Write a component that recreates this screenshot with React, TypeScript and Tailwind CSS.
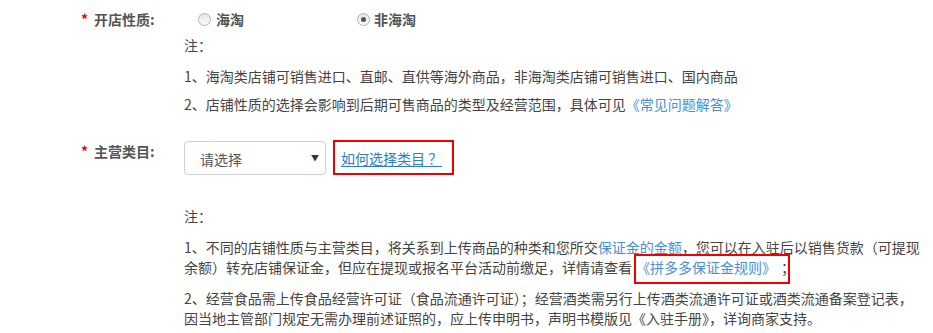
const Radio = ({ checked }: { checked?: boolean }) => (
  <span className="inline-flex h-[13px] w-[13px] items-center justify-center rounded-full border border-[#b5b5b5] bg-gradient-to-b from-[#e6e6e6] to-[#fbfbfb]">
    {checked && <span className="h-[5px] w-[5px] rounded-full bg-[#555]" />}
  </span>
);

const Label = ({ text }: { text: string }) => (
  <div className="flex w-[184px] shrink-0 items-start pl-[81px] text-[14px] font-bold leading-[20px] text-[#555]">
    <span className="mr-[6px] text-[#e60012]">*</span>
    <span>{text}</span>
  </div>
);

export default function App() {
  return (
    <div
      className="min-h-[333px] w-[933px] bg-white text-[14px] leading-[20px] text-[#444]"
      style={{ fontFamily: '"Noto Sans CJK SC", "Noto Sans", sans-serif' }}
    >
      {/* 开店性质 */}
      <div className="flex pt-[9px]">
        <Label text="开店性质:" />
        <div className="w-[740px]">
          <div className="flex items-center font-bold text-[#555]">
            <label className="flex w-[173px] items-center gap-[5px] pl-[14px]">
              <Radio />
              <span>海淘</span>
            </label>
            <label className="flex items-center gap-[4px]">
              <Radio checked />
              <span>非海淘</span>
            </label>
          </div>
          <p className="mt-[6px]">注：</p>
          <p className="mt-[11px]">1、海淘类店铺可销售进口、直邮、直供等海外商品，非海淘类店铺可销售进口、国内商品</p>
          <p className="mt-[8px]">
            2、店铺性质的选择会影响到后期可售商品的类型及经营范围，具体可见
            <a className="text-[#4a8fd3]">《常见问题解答》</a>
          </p>
        </div>
      </div>

      {/* 主营类目 */}
      <div className="mt-[26px] flex">
        <div className="pt-[1px]">
          <Label text="主营类目:" />
        </div>
        <div className="w-[740px]">
          <div className="flex items-center">
            <div className="flex h-[34px] w-[142px] items-center justify-between rounded-[4px] border border-[#d0d0d0] pl-[15px] pr-[6px] text-[#555]">
              <span className="pt-[3px]">请选择</span>
              <span className="text-[8px] text-[#333]">▼</span>
            </div>
            <div className="ml-[7px] flex h-[35px] items-center border-2 border-[#ee0000] pl-[6px] pr-[10px]">
              <a className="text-[#2f7cc6] underline underline-offset-[2px]">如何选择类目 ？</a>
            </div>
          </div>
          <p className="mt-[31px]">注：</p>
          <p className="mt-[11px] w-[738px]">
            1、不同的店铺性质与主营类目，将关系到上传商品的种类和您所交
            <a className="text-[#4a8fd3]">保证金的金额</a>
            ，您可以在入驻后以销售货款（可提现余额）转充店铺保证金，但应在提现或报名平台活动前缴足，详情请查看
            <span className="relative ml-[4px]">
              <a className="text-[#4a8fd3]">《拼多多保证金规则》</a>
              <span className="absolute -bottom-[7px] -left-[2px] -right-[21px] -top-[3px] border-2 border-[#ee0000]" />
            </span>
            <span className="ml-[12px]">；</span>
          </p>
          <p className="mt-[11px] w-[738px]">
            2、经营食品需上传食品经营许可证（食品流通许可证）；经营酒类需另行上传酒类流通许可证或酒类流通备案登记表，因当地主管部门规定无需办理前述证照的，应上传申明书，声明书模版见《入驻手册》，详询商家支持。
          </p>
        </div>
      </div>
    </div>
  );
}
